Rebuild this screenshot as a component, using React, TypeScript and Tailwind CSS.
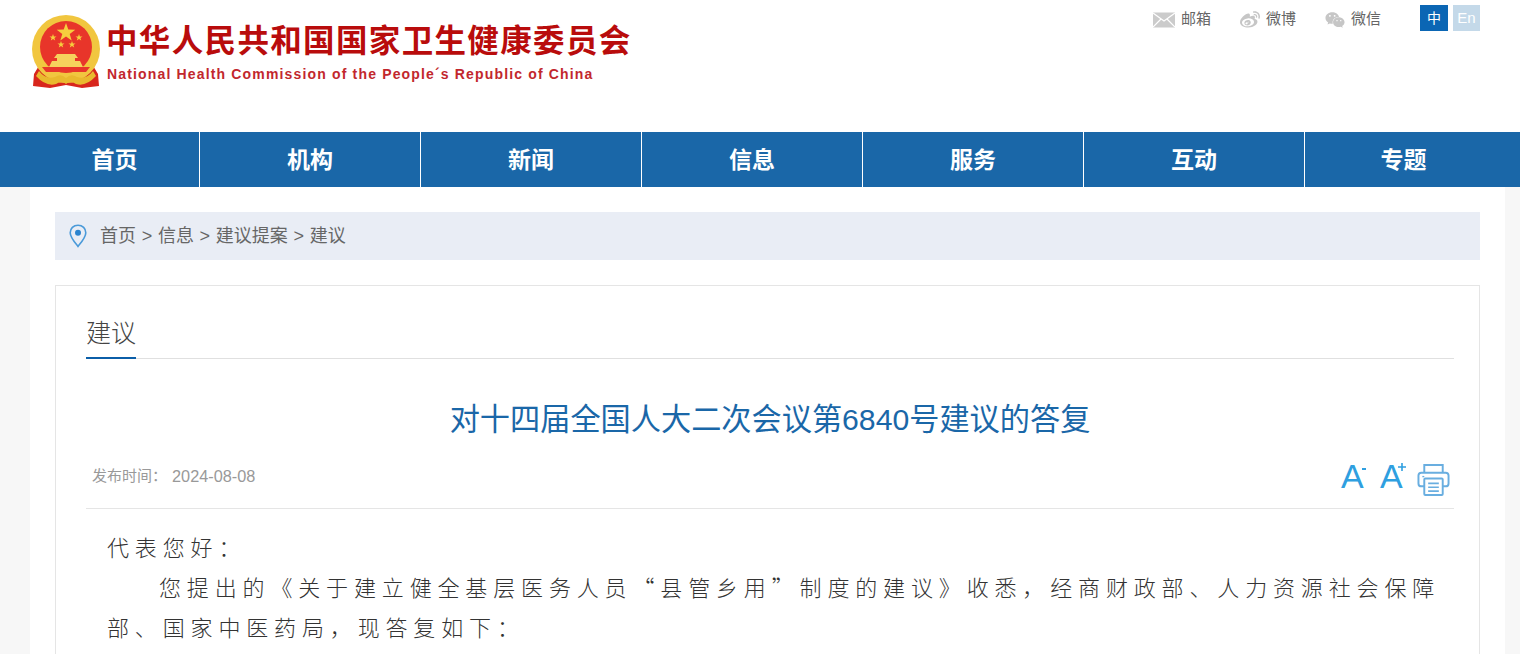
import React from 'react';
import { FaWeibo, FaWeixin } from 'react-icons/fa';

const cjk = 'font-["Liberation_Sans","Noto_Sans_CJK_SC",sans-serif]';

const navItems = [
  { label: '首页', width: 'w-[170px]' },
  { label: '机构', width: 'w-[221px]' },
  { label: '新闻', width: 'w-[221px]' },
  { label: '信息', width: 'w-[221px]' },
  { label: '服务', width: 'w-[221px]' },
  { label: '互动', width: 'w-[221px]' },
  { label: '专题', width: 'w-[197px]' },
];

const Emblem = () => (
  <svg width="72" height="76" viewBox="0 0 72 76" className="shrink-0">
    <path d="M10 50 L4 60 L3 72 L20 74 L36 71 L52 74 L69 72 L68 60 L62 50 Z" fill="#d8261c" />
    <circle cx="36" cy="35" r="34" fill="#f1c63f" />
    <circle cx="36" cy="33" r="26" fill="#e8352a" />
    <path d="M36 9 l2.3 6.6 7 .1 -5.6 4.2 2 6.7 -5.7 -4 -5.7 4 2 -6.7 -5.6 -4.2 7 -.1 Z" fill="#f6cf3e" />
    <path d="M23 20 l.9 2.4 2.6 .1 -2.1 1.5 .8 2.5 -2.2 -1.5 -2.2 1.5 .8 -2.5 -2.1 -1.5 2.6 -.1 Z" fill="#f6cf3e" />
    <path d="M49 20 l.9 2.4 2.6 .1 -2.1 1.5 .8 2.5 -2.2 -1.5 -2.2 1.5 .8 -2.5 -2.1 -1.5 2.6 -.1 Z" fill="#f6cf3e" />
    <path d="M31 27 l.9 2.4 2.6 .1 -2.1 1.5 .8 2.5 -2.2 -1.5 -2.2 1.5 .8 -2.5 -2.1 -1.5 2.6 -.1 Z" fill="#f6cf3e" />
    <path d="M42 27 l.9 2.4 2.6 .1 -2.1 1.5 .8 2.5 -2.2 -1.5 -2.2 1.5 .8 -2.5 -2.1 -1.5 2.6 -.1 Z" fill="#f6cf3e" />
    <path d="M27 40 h18 l3 4 h-3 v3 h5 l3 6 h-34 l3 -6 h5 v-3 h-3 Z" fill="#f6d25c" />
    <path d="M12 53 H60 L56 58 H16 Z" fill="#e8352a" />
    <path d="M9 57 Q16 66 25 63 Q31 59 36 64 Q41 59 47 63 Q56 66 63 57 L66 62 Q56 73 46 70 Q40 66 36 70 Q32 66 26 70 Q16 73 6 62 Z" fill="#e9b92e" />
  </svg>
);

const MailIcon = () => (
  <svg width="22" height="16" viewBox="0 0 22 16" className="mt-[4px]">
    <rect width="22" height="15" y="0.5" fill="#cbcbcb" />
    <path d="M0 1 L11 9 L22 1 M0 15 L8 7 M22 15 L14 7" stroke="#fff" strokeWidth="1.2" fill="none" />
  </svg>
);

const PinIcon = () => (
  <svg width="18" height="24" viewBox="0 0 18 24">
    <path d="M9 1.2 C4.4 1.2 1.2 4.6 1.2 8.8 C1.2 13.6 6.6 19.4 9 22.4 C11.4 19.4 16.8 13.6 16.8 8.8 C16.8 4.6 13.6 1.2 9 1.2 Z" fill="none" stroke="#4a9ad9" strokeWidth="1.6" />
    <circle cx="9" cy="8.8" r="3" fill="#2b84cf" />
  </svg>
);

const PrintIcon = () => (
  <svg width="33" height="33" viewBox="0 0 33 34" fill="none" stroke="#69aee0" strokeWidth="2">
    <path d="M7 10 V2 H26 V10" />
    <path d="M7 24 H4 Q1 24 1 21 V13 Q1 10 4 10 H29 Q32 10 32 13 V21 Q32 24 29 24 H26" />
    <rect x="7" y="16" width="19" height="17" rx="1" fill="#fff" />
    <path d="M11 21 H22 M11 25 H22 M11 29 H22" strokeWidth="1.6" />
    <path d="M5 14 H7" strokeWidth="1.4" />
  </svg>
);

const FontButton = ({ sign }: { sign: 'minus' | 'plus' }) => (
  <div className="relative w-[27px] h-[30px] pl-[2px] font-['Liberation_Sans',sans-serif] text-[34px] leading-[27px] text-[#2f9fe0]">
    A
    {sign === 'minus' ? (
      <span className="absolute top-[5px] right-0 w-[4px] h-[1.5px] bg-[#2f9fe0]" />
    ) : (
      <svg width="8" height="8" viewBox="0 0 8 8" className="absolute top-0 -right-[1px]">
        <path d="M4 0 V8 M0 4 H8" stroke="#2f9fe0" strokeWidth="1.6" />
      </svg>
    )}
  </div>
);

export default function App() {
  return (
    <div className={`h-screen overflow-hidden bg-white ${cjk}`}>
      <header className="h-[132px] flex justify-between pl-[30px] pr-[40px]">
        <div className="flex items-start pt-[14px] gap-[4px]">
          <Emblem />
          <div className="pt-[6px]">
            <div className="text-[31.5px] leading-[42px] font-bold tracking-[1.35px] text-[#b90c0c] whitespace-nowrap">
              中华人民共和国国家卫生健康委员会
            </div>
            <div className="text-[14px] leading-[18px] mt-[3px] ml-px font-bold tracking-[1.16px] text-[#c2272d] whitespace-nowrap">
              National Health Commission of the People´s Republic of China
            </div>
          </div>
        </div>
        <div className="flex items-start pt-[5px] text-[15px] text-[#666]">
          <div className="flex items-center h-[26px] w-[87px] gap-[6px]">
            <MailIcon />
            <span className="mt-[2px]">邮箱</span>
          </div>
          <div className="flex items-center h-[26px] w-[85px] gap-[6px]">
            <FaWeibo className="mt-[4px] text-[20px] text-[#c6c6c6]" />
            <span className="mt-[2px]">微博</span>
          </div>
          <div className="flex items-center h-[26px] w-[95px] gap-[6px]">
            <FaWeixin className="mt-[4px] text-[20px] text-[#c6c6c6]" />
            <span className="mt-[2px]">微信</span>
          </div>
          <div className="w-[28px] h-[26px] mr-[5px] flex items-center justify-center bg-[#0b66b4] text-[14px] text-white">中</div>
          <div className="w-[27px] h-[26px] flex items-center justify-center bg-[#c4d9e9] text-white">En</div>
        </div>
      </header>

      <nav className="h-[55px] bg-[#1a67a8] pl-[30px] flex">
        {navItems.map((item, i) => (
          <div
            key={item.label}
            className={`${item.width} flex items-center justify-center pt-[2px] text-[23px] font-bold text-white ${i < navItems.length - 1 ? 'border-r border-white' : ''}`}
          >
            {item.label}
          </div>
        ))}
      </nav>

      <div className="h-[467px] bg-[#f7f7f7] px-[30px] pr-[15px]">
        <main className="h-full bg-white px-[25px] pt-[25px]">
          <div className="h-[48px] bg-[#e9edf5] flex items-center pl-[14px] gap-[13px] text-[18px] text-[#666] [word-spacing:0.7px]">
            <PinIcon />
            <span>首页 &gt; 信息 &gt; 建议提案 &gt; 建议</span>
          </div>

          <section className="mt-[25px] h-[400px] border border-[#e5e5e5] pl-[30px] pr-[25px]">
            <div className="h-[73px] flex items-end border-b border-[#e0e0e0]">
              <div className="w-[50px] h-[74px] -mb-px pt-[30px] text-[25px] leading-[36px] font-light text-[#444] border-b-2 border-[#0b5ea8] whitespace-nowrap">
                建议
              </div>
            </div>

            <h1 className="mt-[41px] text-center text-[30.2px] leading-[40px] text-[#1a67a8] font-normal whitespace-nowrap">
              对十四届全国人大二次会议第6840号建议的答复
            </h1>

            <div className="h-[60px] mt-[9px] flex justify-between items-start border-b border-[#e5e5e5] pl-[6px] pr-[4px]">
              <div className="flex items-center gap-[5px] h-[20px] mt-[17px] text-[#999]">
                <span className="text-[15px]">发布时间：</span>
                <span className="text-[16.3px]">2024-08-08</span>
              </div>
              <div className="flex items-start gap-[12px] mt-[14px]">
                <FontButton sign="minus" />
                <FontButton sign="plus" />
                <PrintIcon />
              </div>
            </div>

            <div className='pt-[17px] pl-[21px] font-["Noto_Sans_CJK_SC","Liberation_Serif",serif] text-[22px] leading-[40px] tracking-[5.85px] font-light text-[#333] whitespace-nowrap'>
              <p>代表您好：</p>
              <p className="indent-[52px]">您提出的《关于建立健全基层医务人员“县管乡用”制度的建议》收悉，经商财政部、人力资源社会保障</p>
              <p>部、国家中医药局，现答复如下：</p>
            </div>
          </section>
        </main>
      </div>
    </div>
  );
}
